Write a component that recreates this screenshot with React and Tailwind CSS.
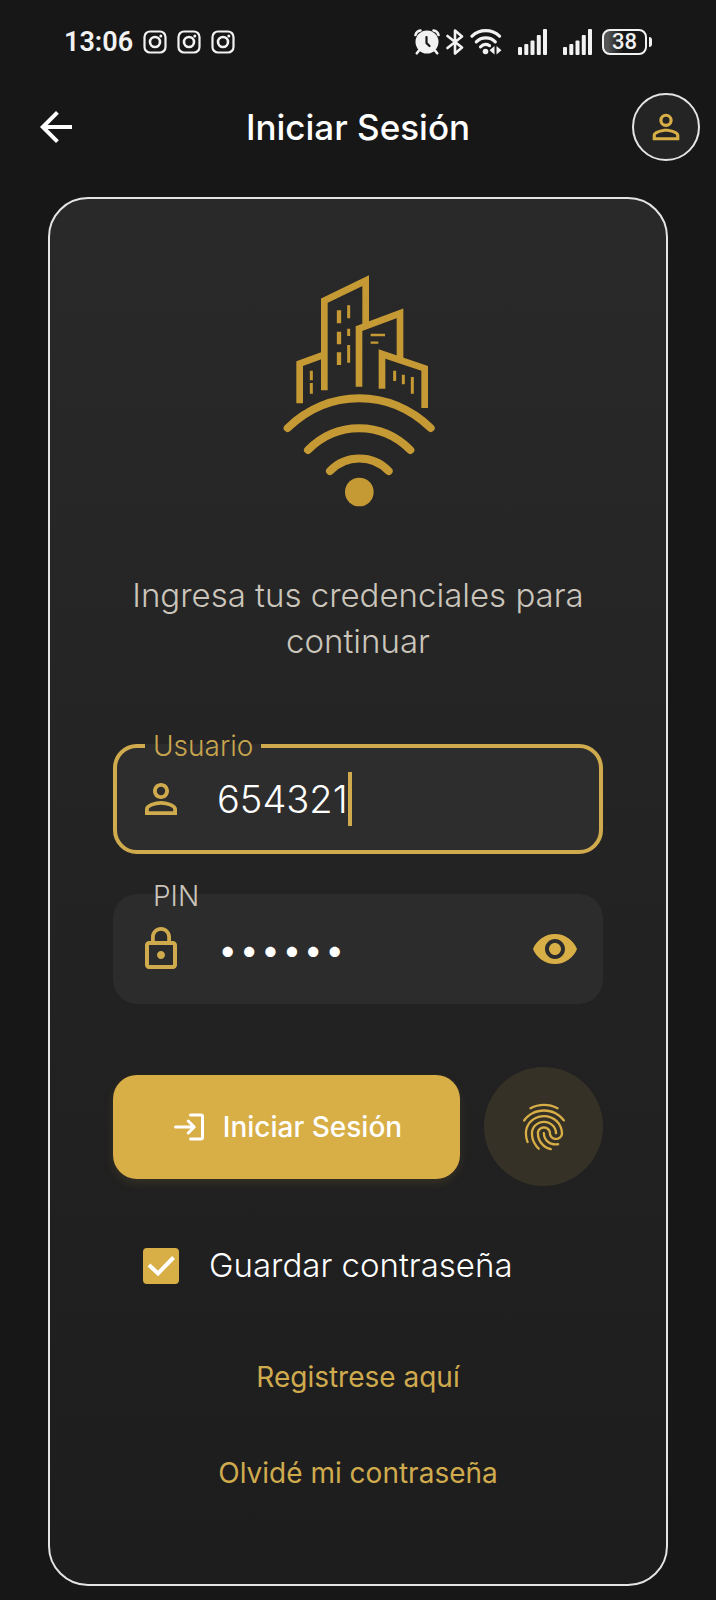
import { useState } from "react";
import {
  MdArrowBack,
  MdFingerprint,
  MdLockOutline,
  MdPersonOutline,
  MdVisibility,
  MdVisibilityOff,
} from "react-icons/md";

function InstagramIcon() {
  return (
    <svg width="24" height="24" viewBox="0 0 24 24" fill="none" stroke="currentColor" strokeWidth="2.2">
      <rect x="1.5" y="1.5" width="21" height="21" rx="5.5" />
      <circle cx="12" cy="12" r="5" strokeWidth="2.6" />
      <circle cx="17.8" cy="6" r="1.5" fill="currentColor" stroke="none" />
    </svg>
  );
}

function AlarmIcon() {
  return (
    <svg width="26" height="26" viewBox="0 0 26 26" fill="none" stroke="currentColor" strokeLinecap="round">
      <circle cx="13" cy="13" r="11.5" fill="currentColor" stroke="none" />
      <path d="M1.5 6a6 6 0 0 1 5-4.500M24.500 6a6 6 0 0 0-5-4.500" strokeWidth="2.600" />
      <path d="M5 21.500l-2.200 2.800M21 21.500l2.200 2.800" strokeWidth="2.600" />
      <path d="M12.500 8v6l3 3" stroke="#171717" strokeWidth="2.200" />
    </svg>
  );
}

function BluetoothIcon() {
  return (
    <svg width="18" height="26" viewBox="0 0 18 26" fill="none" stroke="currentColor" strokeWidth="2.600" strokeLinejoin="round" strokeLinecap="round">
      <path d="M1.500 7L16 18.500l-7 6V1.500l7 6L1.500 19" />
    </svg>
  );
}

function WifiIcon() {
  return (
    <svg width="32" height="26" viewBox="0 0 32 26" fill="none" stroke="currentColor" strokeLinecap="round">
      <path d="M2 7.200a20 20 0 0 1 27.500 0" strokeWidth="3.200" />
      <path d="M6.300 12.800a13.500 13.500 0 0 1 19 0" strokeWidth="3.200" />
      <path d="M10.500 17.800a7.500 7.500 0 0 1 9-1.200" strokeWidth="3.200" />
      <circle cx="15.500" cy="22.500" r="2.800" fill="currentColor" stroke="none" />
      <path d="M24.500 17v8.500l-5-4.200zM26.500 17v8.500l5-4.200z" fill="currentColor" stroke="none" />
    </svg>
  );
}

function SignalIcon() {
  return (
    <svg width="29" height="26" viewBox="0 0 29 26" fill="currentColor">
      <rect x="0" y="18" width="4" height="8" rx="1" />
      <rect x="6.300" y="15" width="4" height="11" rx="1" />
      <rect x="12.500" y="11.500" width="4" height="14.500" rx="1" />
      <rect x="18.800" y="6" width="4" height="20" rx="1" />
      <rect x="25" y="0" width="4" height="26" rx="1" />
    </svg>
  );
}

function LoginIcon() {
  return (
    <svg
      className="shrink-0"
      width="36"
      height="36"
      viewBox="0 0 24 24"
      fill="none"
      stroke="currentColor"
      strokeWidth="2"
      strokeLinecap="round"
      strokeLinejoin="round"
    >
      <path d="M3 12h12M11.500 8l4 4-4 4" />
      <path d="M13 4h7a1 1 0 0 1 1 1v14a1 1 0 0 1-1 1h-7" />
    </svg>
  );
}

function Logo() {
  return (
    <svg
      width="200"
      height="260"
      viewBox="-6 0 600 780"
      fill="none"
      stroke="#c59a34"
      strokeWidth="20"
      role="img"
      aria-label="Logo"
    >
      <path d="M193 391V122L317 62V195" />
      <path d="M297 380V206L420 160V295" />
      <path d="M119 430V311L193 284" />
      <path d="M366 386V282L494 325V444" />
      <path d="M237 151v39M237 215v38M237 277v38" strokeWidth="13" />
      <path d="M266 136v39M266 206v22M266 255v53" strokeWidth="9" />
      <path d="M154 332v29M154 369v32M404 332v31M430 344v29M457 351v50" strokeWidth="9" />
      <path d="M332 225h43M332 248h23" strokeWidth="7" />
      <g strokeWidth="24" strokeLinecap="round">
        <path d="M83 504C205 385 390 385 512 504" />
        <path d="M144 570C230 483 365 483 451 570" />
        <path d="M210 633C258 583 338 583 386 633" />
      </g>
      <circle cx="298" cy="696" r="43" fill="#c59a34" stroke="none" />
    </svg>
  );
}

function StatusBar() {
  return (
    <div className="flex items-center justify-between px-16 pt-6 text-[#f2f2f2]">
      <div className="flex h-9 items-center gap-2.5 font-[Roboto,sans-serif]">
        <span className="text-[27px] leading-9 font-semibold">13:06</span>
        <InstagramIcon />
        <InstagramIcon />
        <InstagramIcon />
      </div>
      <div className="flex h-9 items-center">
        <div className="flex gap-1.5">
          <AlarmIcon />
          <BluetoothIcon />
          <WifiIcon />
        </div>
        <div className="ml-4 flex gap-4">
          <SignalIcon />
          <SignalIcon />
        </div>
        <div className="ml-2.5 flex items-center gap-0.5">
          <span className="flex h-[26px] w-[45px] items-center justify-center rounded-lg border-2 border-[#f2f2f2] bg-linear-to-r from-[#555] from-10% to-[#171717] to-45% font-[Roboto,sans-serif] text-[22px] leading-5 font-medium">
            38
          </span>
          <span className="h-2.5 w-[3px] rounded-r bg-[#f2f2f2]" />
        </div>
      </div>
    </div>
  );
}

function App() {
  const [user, setUser] = useState("654321");
  const [pin, setPin] = useState("123456");
  const [showPin, setShowPin] = useState(false);
  const [remember, setRemember] = useState(true);

  return (
    <div className="min-h-screen bg-[#171717] pb-3.5 font-[Inter,sans-serif] text-white">
      <StatusBar />

      {/* Header */}
      <header className="mt-[33px] flex items-center justify-between px-4">
        <button type="button" aria-label="Volver" className="w-[68px] pl-4">
          <MdArrowBack size={48} />
        </button>
        <h1 className="text-[35px] font-medium">Iniciar Sesión</h1>
        <button
          type="button"
          aria-label="Perfil"
          className="flex size-[68px] items-center justify-center rounded-full border-2 border-[#e4e4e4] bg-[#242424] text-[#d8ae47]"
        >
          <MdPersonOutline size={40} />
        </button>
      </header>

      {/* Login card */}
      <main className="mx-12 mt-9 rounded-[40px] border-2 border-[#e4e4e4] bg-linear-to-b from-[#292929] to-[#1d1d1d] px-[63px] pt-[61px] pb-[93px]">
        <form onSubmit={(e) => e.preventDefault()}>
          <div className="flex justify-center">
            <Logo />
          </div>
          <p className="mt-[52px] text-center text-[33px] leading-[46px] font-light text-[#cbc5bb]">
            Ingresa tus credenciales para continuar
          </p>

          {/* Usuario */}
          <fieldset className="mt-16 min-w-0 rounded-3xl border-4 border-[#d0ab4e] bg-[#2d2d2d] pr-5 pb-4 pl-5">
            <legend className="ml-2 px-2 text-[28px] leading-9 font-light text-[#c9a64e]">
              <label htmlFor="usuario">Usuario</label>
            </legend>
            <div className="flex h-[70px] items-center">
              <MdPersonOutline size={48} className="mr-8 shrink-0 text-[#d0ab4e]" />
              <input
                id="usuario"
                type="text"
                value={user}
                onChange={(e) => setUser(e.target.value)}
                className="field-sizing-content max-w-full bg-transparent text-[38px] font-light caret-transparent outline-none"
              />
              <span className="h-[54px] w-1 bg-[#d0ab4e]" />
            </div>
          </fieldset>

          {/* PIN */}
          <fieldset className="mt-6 min-w-0 rounded-3xl border-4 border-transparent bg-[#2c2c2c] pr-5 pb-4 pl-5">
            <legend className="ml-2 px-2 text-[28px] leading-9 font-light text-[#cbc5bb]">
              <label htmlFor="pin">PIN</label>
            </legend>
            <div className="flex h-[70px] items-center">
              <MdLockOutline size={48} className="mr-8 shrink-0 text-[#d0ab4e]" />
              <input
                id="pin"
                type={showPin ? "text" : "password"}
                value={pin}
                onChange={(e) => setPin(e.target.value)}
                className="min-w-0 grow bg-transparent text-[38px] font-light outline-none"
              />
              <button
                type="button"
                aria-label="Mostrar PIN"
                onClick={() => setShowPin(!showPin)}
                className="shrink-0 text-[#d8ae47]"
              >
                {showPin ? <MdVisibilityOff size={48} /> : <MdVisibility size={48} />}
              </button>
            </div>
          </fieldset>

          <div className="mt-[63px] flex items-center gap-6">
            <button
              type="submit"
              className="flex h-[104px] grow items-center justify-center gap-4 rounded-3xl bg-[#d8ae47] text-[28px] font-medium shadow-[0_4px_10px_rgba(216,174,71,0.12)]"
            >
              <LoginIcon />
              Iniciar Sesión
            </button>
            <button
              type="button"
              aria-label="Entrar con huella"
              className="flex size-[119px] shrink-0 items-center justify-center rounded-full bg-[#363127] text-[#d8ae47]"
            >
              <MdFingerprint size={56} />
            </button>
          </div>

          {/* Remember password */}
          <label className="mt-14 ml-[30px] flex h-12 items-center gap-[30px]">
            <span className="relative flex size-9">
              <input
                type="checkbox"
                checked={remember}
                onChange={(e) => setRemember(e.target.checked)}
                className="peer size-9 appearance-none rounded border-2 border-[#d8ae47] checked:bg-[#d8ae47]"
              />
              <svg
                className="pointer-events-none absolute inset-0 hidden peer-checked:block"
                viewBox="0 0 36 36"
                fill="none"
                stroke="white"
                strokeWidth="4"
              >
                <path d="M6 17l9 8.500L30.500 9.500" />
              </svg>
            </span>
            <span className="text-[33px] font-light">Guardar contraseña</span>
          </label>

          <div className="mt-[69px] flex flex-col items-center gap-[60px] text-[28px] leading-9 text-[#d0ab4e]">
            <a href="#registro">Registrese aquí</a>
            <a href="#recuperar">Olvidé mi contraseña</a>
          </div>
        </form>
      </main>
    </div>
  );
}

export default App;
